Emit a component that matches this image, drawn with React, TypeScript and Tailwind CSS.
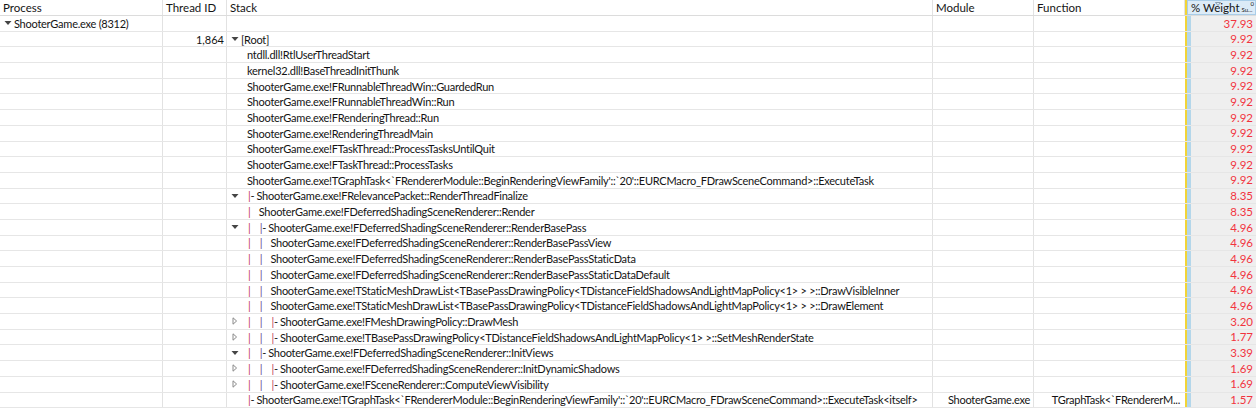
type Row = {
  exp?: "down" | "right";
  pre?: ("p" | "c")[];
  text: string;
  w: string;
  root?: boolean;
  module?: string;
  fn?: string;
};

const rows: Row[] = [
  { exp: "down", root: true, text: "[Root]", w: "9.92" },
  { text: "ntdll.dll!RtlUserThreadStart", w: "9.92" },
  { text: "kernel32.dll!BaseThreadInitThunk", w: "9.92" },
  { text: "ShooterGame.exe!FRunnableThreadWin::GuardedRun", w: "9.92" },
  { text: "ShooterGame.exe!FRunnableThreadWin::Run", w: "9.92" },
  { text: "ShooterGame.exe!FRenderingThread::Run", w: "9.92" },
  { text: "ShooterGame.exe!RenderingThreadMain", w: "9.92" },
  { text: "ShooterGame.exe!FTaskThread::ProcessTasksUntilQuit", w: "9.92" },
  { text: "ShooterGame.exe!FTaskThread::ProcessTasks", w: "9.92" },
  {
    text: "ShooterGame.exe!TGraphTask<`FRendererModule::BeginRenderingViewFamily'::`20'::EURCMacro_FDrawSceneCommand>::ExecuteTask",
    w: "9.92",
  },
  { exp: "down", pre: ["c"], text: "ShooterGame.exe!FRelevancePacket::RenderThreadFinalize", w: "8.35" },
  { pre: ["p"], text: "ShooterGame.exe!FDeferredShadingSceneRenderer::Render", w: "8.35" },
  { exp: "down", pre: ["p", "c"], text: "ShooterGame.exe!FDeferredShadingSceneRenderer::RenderBasePass", w: "4.96" },
  { pre: ["p", "p"], text: "ShooterGame.exe!FDeferredShadingSceneRenderer::RenderBasePassView", w: "4.96" },
  { pre: ["p", "p"], text: "ShooterGame.exe!FDeferredShadingSceneRenderer::RenderBasePassStaticData", w: "4.96" },
  { pre: ["p", "p"], text: "ShooterGame.exe!FDeferredShadingSceneRenderer::RenderBasePassStaticDataDefault", w: "4.96" },
  {
    pre: ["p", "p"],
    text: "ShooterGame.exe!TStaticMeshDrawList<TBasePassDrawingPolicy<TDistanceFieldShadowsAndLightMapPolicy<1> > >::DrawVisibleInner",
    w: "4.96",
  },
  {
    pre: ["p", "p"],
    text: "ShooterGame.exe!TStaticMeshDrawList<TBasePassDrawingPolicy<TDistanceFieldShadowsAndLightMapPolicy<1> > >::DrawElement",
    w: "4.96",
  },
  { exp: "right", pre: ["p", "p", "c"], text: "ShooterGame.exe!FMeshDrawingPolicy::DrawMesh", w: "3.20" },
  {
    exp: "right",
    pre: ["p", "p", "c"],
    text: "ShooterGame.exe!TBasePassDrawingPolicy<TDistanceFieldShadowsAndLightMapPolicy<1> >::SetMeshRenderState",
    w: "1.77",
  },
  { exp: "down", pre: ["p", "c"], text: "ShooterGame.exe!FDeferredShadingSceneRenderer::InitViews", w: "3.39" },
  { exp: "right", pre: ["p", "p", "c"], text: "ShooterGame.exe!FDeferredShadingSceneRenderer::InitDynamicShadows", w: "1.69" },
  { exp: "right", pre: ["p", "p", "c"], text: "ShooterGame.exe!FSceneRenderer::ComputeViewVisibility", w: "1.69" },
  {
    pre: ["c"],
    text: "ShooterGame.exe!TGraphTask<`FRendererModule::BeginRenderingViewFamily'::`20'::EURCMacro_FDrawSceneCommand>::ExecuteTask<itself>",
    w: "1.57",
    module: "ShooterGame.exe",
    fn: "TGraphTask<`FRendererM...",
  },
];

function Down() {
  return (
    <svg width="8" height="6" viewBox="0 0 8 6" className="shrink-0">
      <path d="M0.5 1 L7.5 1 L4 5 Z" fill="#454545" />
    </svg>
  );
}

function Right() {
  return (
    <svg width="8" height="8" viewBox="0 0 8 8" className="shrink-0">
      <path d="M2 0.8 L5.6 4 L2 7.2 Z" fill="none" stroke="#8a8a8a" strokeWidth="1" />
    </svg>
  );
}

function Prefix({ pre }: { pre: ("p" | "c")[] }) {
  return (
    <>
      {pre.map((t, i) => {
        const color = i % 2 === 0 ? "text-[#c0405a]" : "text-[#6a4a90]";
        return t === "p" ? (
          <span key={i} className={`w-[11.7px] pl-[1px] shrink-0 ${color}`}>
            |
          </span>
        ) : (
          <span key={i} className="w-[9.5px] pl-[1px] shrink-0 flex">
            <span className={color}>|</span>
            <span>-</span>
          </span>
        );
      })}
    </>
  );
}

const cell = "h-full border-r border-[#e2e2e2] shrink-0 overflow-hidden whitespace-nowrap";
const weight = "flex-1 h-full bg-[#efefef] flex items-center justify-end pr-[3px] text-[#f2343e] text-[11.5px] tracking-normal";

export default function App() {
  return (
    <div
      className="w-[1256px] h-[409px] overflow-hidden bg-white text-[#141414] text-[11px] leading-none tracking-[-0.25px]"
      style={{ fontFamily: 'Lato, "Noto Sans", sans-serif' }}
    >
      {/* header */}
      <div className="flex h-[16px] border-b border-[#dcdcdc] items-stretch text-[11.5px] tracking-normal">
        <div className={`${cell} w-[163px] pl-[3px] flex items-center border-[#dadada]`}>Process</div>
        <div className={`${cell} w-[64px] pl-[3px] flex items-center border-[#dadada]`}>Thread ID</div>
        <div className={`${cell} w-[706px] pl-[3px] flex items-center border-[#dadada]`}>Stack</div>
        <div className={`${cell} w-[101px] pl-[3px] flex items-center border-[#dadada]`}>Module</div>
        <div className={`${cell} w-[151px] pl-[3px] flex items-center border-[#dadada]`}>Function</div>
        <div className="w-[2px] h-full bg-[#f2d437] shrink-0" />
        <div className="relative flex-1 h-full bg-[#dcebf7] border border-[#a9cde8] flex items-center pl-[3px] whitespace-nowrap">
          <span>% Weight</span>
          <span className="text-[6px] ml-[2px] mt-[5px]">Su...</span>
          <span className="absolute right-[1px] top-[0px] text-[6px]">0</span>
          <svg width="6" height="4" viewBox="0 0 6 4" className="absolute left-[27px] top-[1px]">
            <path d="M0.5 0.5 L5.5 0.5 L3 3.5 Z" fill="none" stroke="#7a8ea0" strokeWidth="0.8" />
          </svg>
        </div>
      </div>

      {/* process row */}
      <div className="flex h-[15.7px] border-b border-[#e6e6e6]">
        <div className={`${cell} w-[163px] pl-[4px] flex items-center gap-[2px]`}>
          <Down />
          <span>ShooterGame.exe (8312)</span>
        </div>
        <div className={`${cell} w-[64px]`} />
        <div className={`${cell} w-[706px]`} />
        <div className={`${cell} w-[101px]`} />
        <div className={`${cell} w-[151px] border-r-0`} />
        <div className="w-[2px] h-full bg-[#f2d437] shrink-0" />
        <div className="w-[4px] h-full bg-[#b3d6ea] shrink-0" />
        <div className={weight}>37.93</div>
      </div>

      {rows.map((r, i) => (
        <div key={i} className="flex h-[15.7px] border-b border-[#e6e6e6]">
          <div className={`${cell} w-[163px]`} />
          <div className={`${cell} w-[64px] flex items-center justify-end pr-[2px] tracking-normal`}>{i === 0 ? "1,864" : ""}</div>
          <div className={`${cell} w-[706px] flex items-center`}>
            <div className="w-[14px] pl-[4px] shrink-0 flex items-center">
              {r.exp === "down" ? <Down /> : r.exp === "right" ? <Right /> : null}
            </div>
            {!r.root && <div className="w-[6px] shrink-0" />}
            <Prefix pre={r.pre ?? []} />
            <span>{r.text}</span>
          </div>
          <div className={`${cell} w-[101px] flex items-center justify-end pr-[3px]`}>{r.module ?? ""}</div>
          <div className={`${cell} w-[151px] flex items-center justify-end pr-[5px] border-r-0`}>{r.fn ?? ""}</div>
          <div className="w-[2px] h-full bg-[#f2d437] shrink-0" />
          <div className="w-[4px] h-full bg-[#b3d6ea] shrink-0" />
          <div className={weight}>{r.w}</div>
        </div>
      ))}
    </div>
  );
}
